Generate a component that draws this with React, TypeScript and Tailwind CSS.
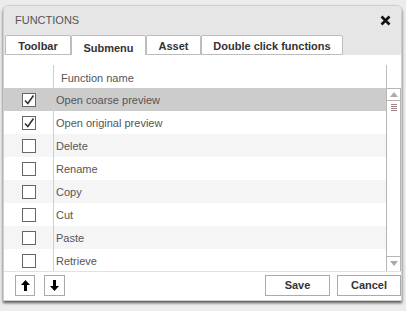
import React from 'react';

const rows = [
  { name: 'Open coarse preview', checked: true },
  { name: 'Open original preview', checked: true },
  { name: 'Delete', checked: false },
  { name: 'Rename', checked: false },
  { name: 'Copy', checked: false },
  { name: 'Cut', checked: false },
  { name: 'Paste', checked: false },
  { name: 'Retrieve', checked: false },
];

const tabs = [
  { label: 'Toolbar', w: 'w-[66px]' },
  { label: 'Submenu', w: 'w-[75px]', active: true },
  { label: 'Asset', w: 'w-[55px]' },
  { label: 'Double click functions', w: 'w-[142px]' },
];

function CheckBox({ checked }: { checked: boolean }) {
  return (
    <div className="w-[14px] h-[14px] border border-[#666] bg-white flex items-center justify-center">
      {checked && (
        <svg width="12" height="12" viewBox="0 0 12 12">
          <path d="M2 6.5 L4.8 9.5 L10.5 1.5" fill="none" stroke="#333" strokeWidth="1.6" />
        </svg>
      )}
    </div>
  );
}

export default function App() {
  return (
    <div className="w-[406px] h-[311px] bg-[#ececec] overflow-hidden font-['Liberation_Sans',Arial,sans-serif] pt-[5px] pl-[3px]">
      <div className="w-[399px] h-[296px] bg-white rounded-t-[6px] border border-[#cfcfcf] shadow-[0_2px_3px_rgba(0,0,0,0.65)] flex flex-col overflow-hidden">
        {/* title bar */}
        <div className="h-[29px] bg-[#e6e6e6] flex items-center justify-between pl-[11px] pr-[10px]">
          <span className="text-[11px] text-[#555]">FUNCTIONS</span>
          <svg width="11" height="11" viewBox="0 0 11 11">
            <path d="M1.5 1.5 L9.5 9.5 M9.5 1.5 L1.5 9.5" stroke="#111" strokeWidth="2.6" />
          </svg>
        </div>

        {/* tabs */}
        <div className="h-[20px] bg-[#e6e6e6] flex items-end pl-[1px]">
          {tabs.map((t) => (
            <div
              key={t.label}
              className={`${t.w} h-[20px] bg-white border border-[#bdbdbd] rounded-t-[2px] flex justify-center text-[11px] font-bold text-[#333] ${
                t.active ? 'border-b-0 pt-[4px]' : 'pt-[2px]'
              }`}
            >
              {t.label}
            </div>
          ))}
        </div>

        {/* list */}
        <div className="h-[216px] flex pt-[10px] overflow-hidden">
          <div className="flex-1 flex flex-col">
            <div className="h-[23px] flex shrink-0">
              <div className="w-[50px] border-r border-[#cfcfcf]" />
              <div className="pl-[7px] pt-[5px] text-[11px] text-[#555]">Function name</div>
            </div>
            {rows.map((r, i) => (
              <div
                key={r.name}
                className={`h-[23px] flex shrink-0 ${
                  i === 0 ? 'bg-[#cccccc]' : i % 2 === 0 ? 'bg-[#f5f5f5]' : 'bg-white'
                }`}
              >
                <div className="w-[50px] border-r border-[#cfcfcf] flex items-center justify-center pl-[1px]">
                  <CheckBox checked={r.checked} />
                </div>
                <div className="pl-[2px] pt-[4px] text-[11px] text-[#555]">{r.name}</div>
              </div>
            ))}
          </div>

          {/* scrollbar */}
          <div className="w-[15px] flex flex-col">
            <div className="h-[23px] border-l border-[#bbb]" />
            <div className="flex-1 border-x border-[#b5b5b5] flex flex-col">
              <div className="h-[13px] border-y border-[#b5b5b5] bg-white flex items-center justify-center">
                <svg width="8" height="5" viewBox="0 0 8 5">
                  <path d="M0 5 L4 0 L8 5 Z" fill="#aaa" />
                </svg>
              </div>
              <div className="h-[13px] flex flex-col items-center justify-center gap-[1px] bg-white">
                <div className="w-[6px] h-[1px] bg-[#b08080]" />
                <div className="w-[6px] h-[1px] bg-[#888]" />
                <div className="w-[6px] h-[1px] bg-[#b08080]" />
                <div className="w-[6px] h-[1px] bg-[#888]" />
              </div>
              <div className="flex-1" />
              <div className="h-[13px] border-t border-[#b5b5b5] bg-white flex items-center justify-center mb-[2px]">
                <svg width="8" height="5" viewBox="0 0 8 5">
                  <path d="M0 0 L8 0 L4 5 Z" fill="#aaa" />
                </svg>
              </div>
            </div>
          </div>
        </div>

        {/* footer */}
        <div className="flex-1 flex items-start pt-[3px] pl-[11px] pr-0 border-t border-[#e2e2e2]">
          <button className="w-[20px] h-[21px] border border-[#aaa] bg-white flex items-center justify-center">
            <svg width="9" height="11" viewBox="0 0 9 11">
              <path d="M4.5 0 L9 5 L6 5 L6 11 L3 11 L3 5 L0 5 Z" fill="#000" />
            </svg>
          </button>
          <button className="ml-[9px] w-[21px] h-[21px] border border-[#aaa] bg-white flex items-center justify-center">
            <svg width="9" height="11" viewBox="0 0 9 11">
              <path d="M4.5 11 L9 6 L6 6 L6 0 L3 0 L3 6 L0 6 Z" fill="#000" />
            </svg>
          </button>
          <div className="flex-1" />
          <button className="w-[65px] h-[21px] border border-[#aaa] bg-white text-[11px] font-bold text-[#333]">
            Save
          </button>
          <button className="ml-[7px] w-[64px] h-[21px] border border-[#aaa] bg-white text-[11px] font-bold text-[#333]">
            Cancel
          </button>
        </div>
      </div>
    </div>
  );
}
